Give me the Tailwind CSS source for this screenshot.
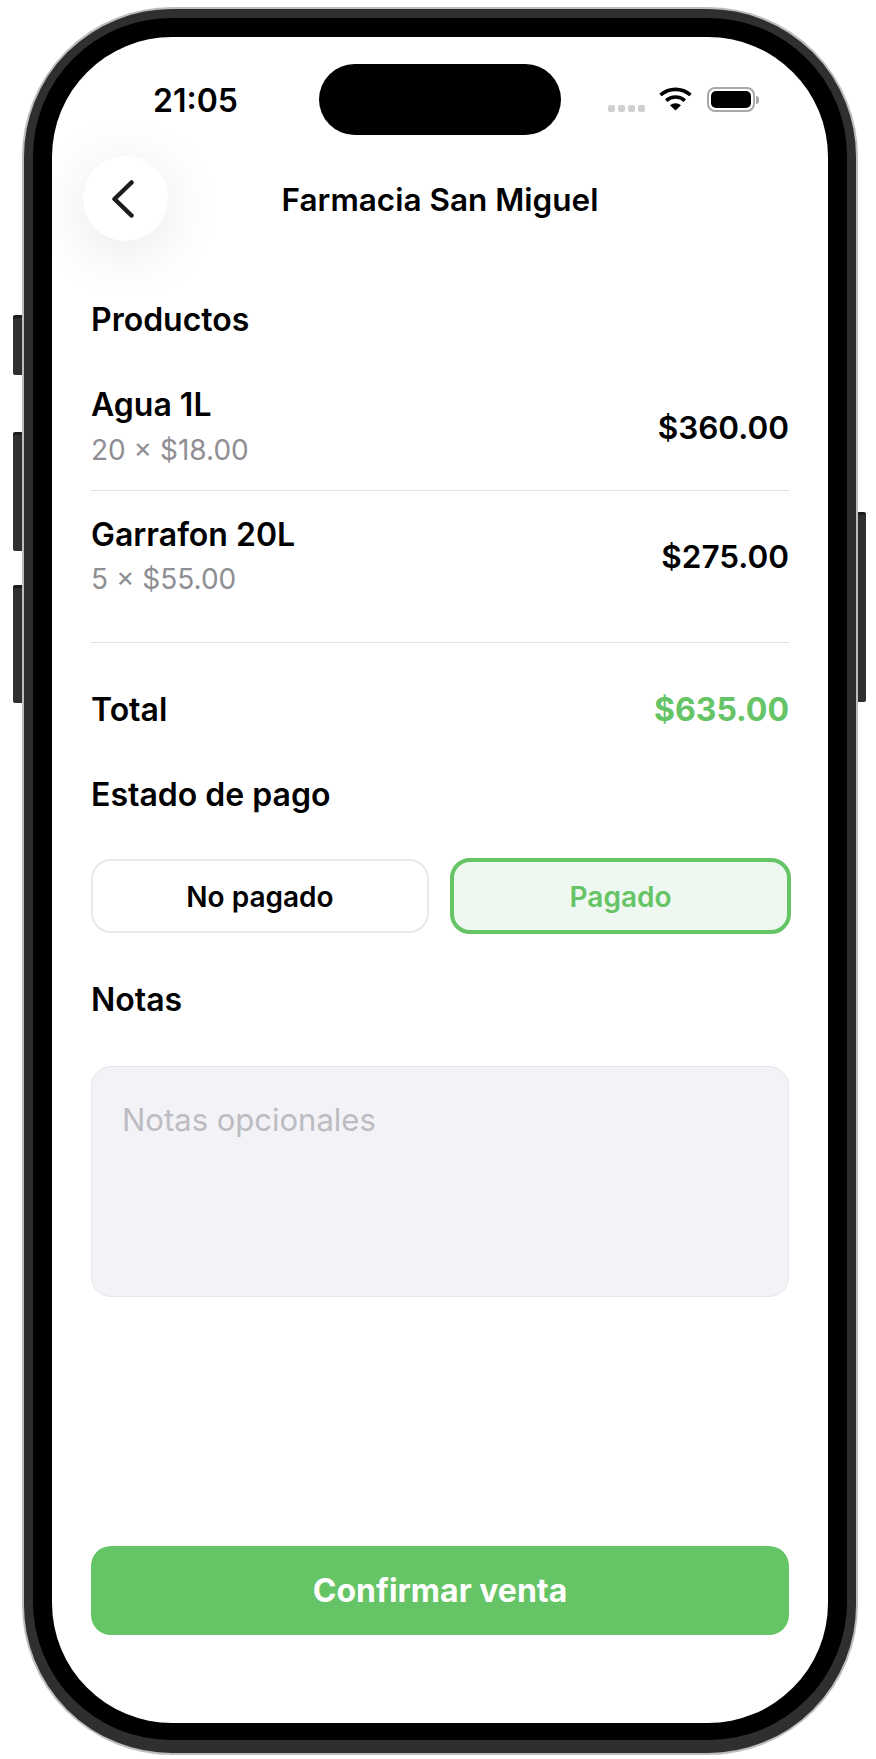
<!DOCTYPE html>
<html lang="es">
<head>
  <meta charset="UTF-8"/>
  <meta name="viewport" content="width=device-width,initial-scale=1"/>
  <title>Farmacia San Miguel</title>
  <script src="https://cdn.jsdelivr.net/npm/@tailwindcss/browser@4"></script>
</head>
<body class="bg-white font-['Inter',sans-serif] text-black overflow-hidden">
<div class="relative w-[876px] h-[1759px] pt-[7px] pl-[22px]">

  <!-- side buttons -->
  <div class="absolute left-[13px] top-[315px] w-[9px] h-[60px] rounded-l-[2px] bg-[#2f2f2f] border-t-[3px] border-[#1c1c1c]"></div>
  <div class="absolute left-[13px] top-[432px] w-[9px] h-[119px] rounded-l-[2px] bg-[#2f2f2f] border-t-[3px] border-[#1c1c1c]"></div>
  <div class="absolute left-[13px] top-[585px] w-[9px] h-[118px] rounded-l-[2px] bg-[#2f2f2f] border-t-[3px] border-[#1c1c1c]"></div>
  <div class="absolute left-[858px] top-[512px] w-[8px] h-[190px] rounded-r-[2px] bg-[#2f2f2f] border-t-[3px] border-[#1c1c1c]"></div>

  <!-- phone frame -->
  <div class="w-[836px] h-[1748px] rounded-[150px] border-2 border-[#bdbdbd] bg-[#2f2f2f] pt-[9px] px-[9px] pb-[13px]">
    <div class="w-full h-full rounded-[138px] bg-black pt-[19px] px-[19px] pb-[17px]">
      <div class="w-full h-full rounded-[120px] bg-white overflow-hidden flex flex-col">

        <!-- status bar -->
        <div class="flex items-center h-[71px] mt-[27px] mb-[21px] pl-[101px] shrink-0">
          <span class="w-[166px] text-[32px] leading-none font-semibold mt-[3px]">21:05</span>
          <div class="w-[242px] h-[71px] rounded-full bg-black"></div>
          <div class="flex items-center ml-[47px]">
            <div class="flex gap-[3px] mt-[18px]">
              <span class="w-[7px] h-[7px] rounded-[2px] bg-[#cfcfcf]"></span>
              <span class="w-[7px] h-[7px] rounded-[2px] bg-[#cfcfcf]"></span>
              <span class="w-[7px] h-[7px] rounded-[2px] bg-[#cfcfcf]"></span>
              <span class="w-[7px] h-[7px] rounded-[2px] bg-[#cfcfcf]"></span>
            </div>
            <svg class="ml-[14px] w-[33px] h-[24px] -mt-[2px]" viewBox="0 0 33 24" fill="none" stroke="#000" stroke-width="3.6">
              <path d="M1.5 8C10 0.5 23 0.5 31.5 8"/>
              <path d="M7.2 13.6C12.5 8.8 20.5 8.8 25.8 13.6"/>
              <path d="M11 18.3C14 15.6 19 15.6 22 18.3L16.5 23.5Z" fill="#000" stroke="none"/>
            </svg>
            <div class="ml-[15px] flex items-center">
              <div class="w-[48px] h-[25px] rounded-[8px] border-2 border-[#a8a8a8] p-[2px]">
                <div class="w-full h-full rounded-[5px] bg-black"></div>
              </div>
              <div class="w-[3px] h-[8px] ml-[1px] rounded-r-full bg-[#a8a8a8]"></div>
            </div>
          </div>
        </div>

        <!-- header -->
        <div class="grid grid-cols-[85px_1fr_85px] items-center px-[31px] shrink-0">
          <button class="w-[85px] h-[85px] rounded-full bg-white shadow-[0_10px_60px_rgba(0,0,0,0.1)] flex items-center justify-center">
            <svg class="w-[24px] h-[38px] -ml-[6px]" viewBox="0 0 24 38" fill="none" stroke="#1c1c1e" stroke-width="4.5" stroke-linecap="round" stroke-linejoin="round">
              <path d="M20.5 2.5L3.5 19L20.5 35.5"/>
            </svg>
          </button>
          <h1 class="text-center text-[31.5px] leading-[40px] font-[560] mt-[2px]">Farmacia San Miguel</h1>
          <div></div>
        </div>

        <!-- content -->
        <main class="flex-1 flex flex-col px-[39px] pb-[88px]">
          <h2 class="mt-[59px] text-[32px] leading-[40px] font-[560]">Productos</h2>

          <div class="flex justify-between items-center h-[151px] pt-[45px] pb-[20px] border-b border-[#e0e0e0]">
            <div>
              <p class="text-[32px] leading-[40px] font-[560]">Agua 1L</p>
              <p class="mt-[5px] text-[28px] leading-[40px] text-[#8e8e93]">20 × $18.00</p>
            </div>
            <p class="text-[31.5px] leading-[40px] font-semibold">$360.00</p>
          </div>

          <div class="flex justify-between items-center h-[152px] pt-[23px] pb-[42px] border-b border-[#e0e0e0]">
            <div>
              <p class="text-[32px] leading-[40px] font-[560]">Garrafon 20L</p>
              <p class="mt-[4px] text-[28px] leading-[40px] text-[#8e8e93]">5 × $55.00</p>
            </div>
            <p class="text-[31.5px] leading-[40px] font-semibold">$275.00</p>
          </div>

          <div class="mt-[47px] flex justify-between items-center">
            <span class="text-[32px] leading-[40px] font-[560]">Total</span>
            <span class="text-[32px] leading-[40px] font-bold text-[#65c466]">$635.00</span>
          </div>

          <h2 class="mt-[45px] text-[32px] leading-[40px] font-[560]">Estado de pago</h2>

          <div class="mt-[43px] flex items-center justify-between -mr-[2px]">
            <button class="w-[338px] h-[74px] pt-[2px] rounded-[20px] border-2 border-[#e8e8e8] bg-white text-[28px] font-semibold">No pagado</button>
            <button class="w-[341px] h-[76px] pt-[2px] rounded-[20px] border-[4px] border-[#65c466] bg-[#eef8f0] text-[28px] font-semibold text-[#65c466]">Pagado</button>
          </div>

          <h2 class="mt-[46px] text-[32px] leading-[40px] font-[560]">Notas</h2>

          <div class="mt-[46px] h-[231px] rounded-[20px] border border-[#e5e5ea] bg-[#f2f2f7] px-[30px] pt-[33px] text-[31px] leading-[40px] text-[#bcbcc2]">Notas opcionales</div>

          <button class="mt-auto h-[89px] rounded-[20px] bg-[#65c466] text-white text-[32px] font-bold">Confirmar venta</button>
        </main>
      </div>
    </div>
  </div>
</div>
</body>
</html>
